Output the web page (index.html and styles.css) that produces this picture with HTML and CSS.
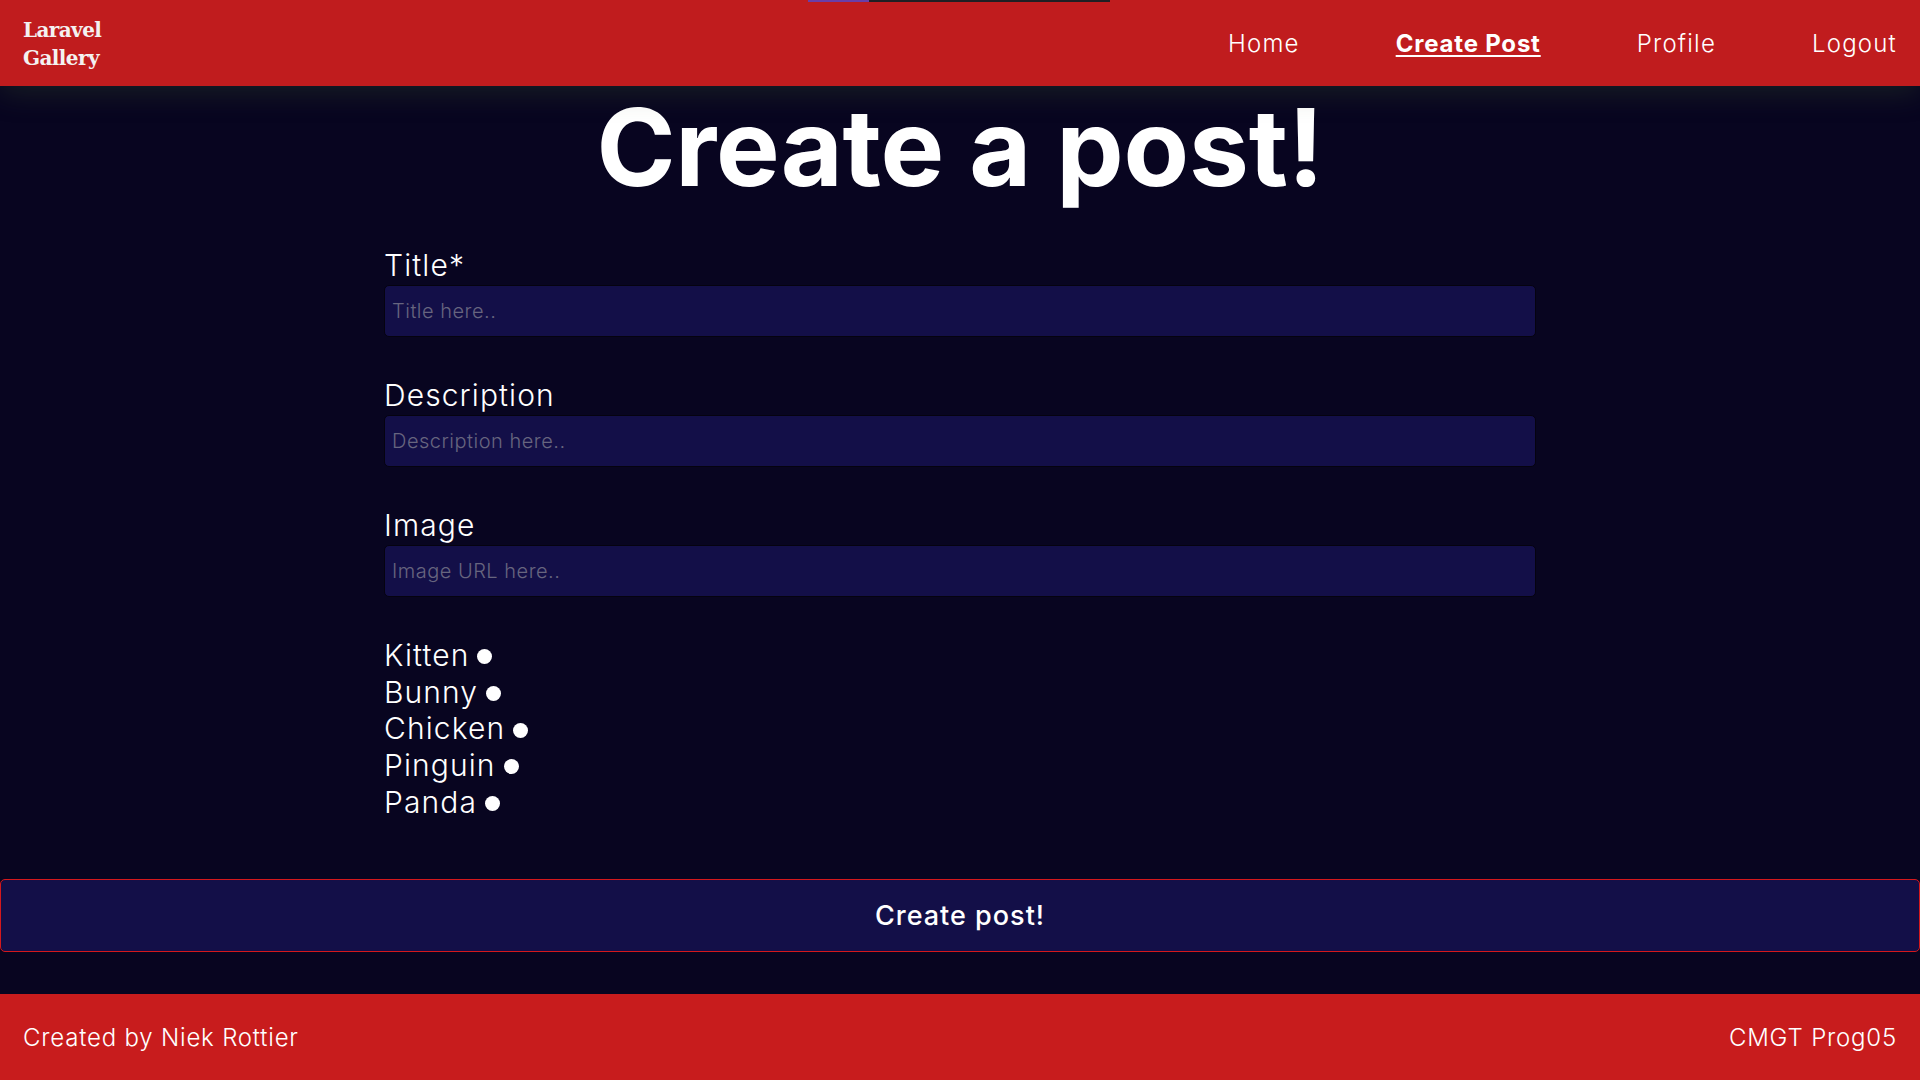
FILE: index.html
```html
<!DOCTYPE html>
<html lang="en">
<head>
<meta charset="utf-8">
<title>Laravel Gallery - Create Post</title>
<link rel="stylesheet" href="styles.css">
</head>
<body>
<div class="topline"><span class="topline-a"></span><span class="topline-b"></span></div>
<header class="nav">
  <a class="logo" href="#">Laravel<br>Gallery</a>
  <nav class="links">
    <a href="#">Home</a>
    <a href="#" class="active">Create Post</a>
    <a href="#">Profile</a>
    <a href="#">Logout</a>
  </nav>
</header>
<main class="main">
  <h1 class="heading">Create a post!</h1>
  <form class="form">
    <div class="fields">
      <div class="group">
        <label class="label" for="title">Title*</label>
        <input class="input" id="title" type="text" placeholder="Title here..">
      </div>
      <div class="group">
        <label class="label" for="desc">Description</label>
        <input class="input" id="desc" type="text" placeholder="Description here..">
      </div>
      <div class="group">
        <label class="label" for="img">Image</label>
        <input class="input" id="img" type="text" placeholder="Image URL here..">
      </div>
      <div class="radios">
        <label class="radio">Kitten<input type="radio" name="animal"></label>
        <label class="radio">Bunny<input type="radio" name="animal"></label>
        <label class="radio">Chicken<input type="radio" name="animal"></label>
        <label class="radio">Pinguin<input type="radio" name="animal"></label>
        <label class="radio">Panda<input type="radio" name="animal"></label>
      </div>
    </div>
    <button class="submit" type="button">Create post!</button>
  </form>
</main>
<footer class="footer">
  <span>Created by Niek Rottier</span>
  <span>CMGT Prog05</span>
</footer>
</body>
</html>
```

FILE: styles.css
```css
* { box-sizing: border-box; }

html, body { margin: 0; padding: 0; }

body {
  background: #080520;
  color: #ffffff;
  font-family: Inter, "Noto Sans", sans-serif;
  min-height: 100vh;
  display: flex;
  flex-direction: column;
}

.topline {
  position: absolute;
  top: 0;
  left: 808px;
  height: 2px;
  display: flex;
  z-index: 5;
}
.topline-a { width: 61px; background: #6a3ea8; }
.topline-b { width: 241px; background: #1f1f24; }

.nav {
  position: relative;
  z-index: 2;
  height: 86px;
  background: #c01c1e;
  display: flex;
  align-items: center;
  justify-content: space-between;
  padding: 0 23px;
  box-shadow: 0 6px 30px rgba(70, 100, 45, 0.28);
}

.logo {
  font-family: "DejaVu Serif", "Liberation Serif", serif;
  font-weight: 700;
  font-size: 20px;
  line-height: 28px;
  color: #f4f1f1;
  text-decoration: none;
  letter-spacing: -0.6px;
  padding-top: 1px;
}

.links {
  display: flex;
  gap: 96px;
}

.links a {
  color: #ffffff;
  font-size: 24px;
  font-weight: 300;
  letter-spacing: 1.2px;
  text-decoration: none;
}

.links a.active {
  font-weight: 700;
  letter-spacing: 0.8px;
  text-decoration: underline;
  text-decoration-thickness: 2px;
  text-underline-offset: 3px;
}

.main {
  display: flex;
  flex-direction: column;
}

.heading {
  margin: 8px 0 0;
  text-align: center;
  font-size: 107px;
  line-height: 107px;
  font-weight: 700;
  letter-spacing: -0.2px;
  color: #ffffff;
}

.form {
  margin-top: 46px;
}

.fields {
  width: 60%;
  margin: 0 auto;
}

.group {
  margin-bottom: 40px;
}

.label {
  display: block;
  font-size: 30px;
  line-height: 36px;
  font-weight: 300;
  letter-spacing: 1.1px;
  margin-bottom: 2px;
}

.input {
  display: block;
  width: 100%;
  height: 52px;
  background: #130f48;
  border: 1px solid #05030f;
  border-radius: 5px;
  color: #ffffff;
  font-family: Inter, "Noto Sans", sans-serif;
  font-size: 20px;
  font-weight: 300;
  letter-spacing: 0.5px;
  padding: 0 7px;
  outline: none;
}

.input::placeholder {
  color: #67657f;
}

.radios {
  display: flex;
  flex-direction: column;
  align-items: flex-start;
}

.radio {
  font-size: 30px;
  line-height: 36.7px;
  font-weight: 300;
  letter-spacing: 1.1px;
}

.radio input {
  appearance: none;
  -webkit-appearance: none;
  width: 15px;
  height: 15px;
  border-radius: 50%;
  background: #ffffff;
  border: none;
  margin: 0 0 0 8px;
  vertical-align: middle;
  position: relative;
  top: -1px;
}

.submit {
  display: block;
  width: 100%;
  height: 73px;
  margin-top: 58px;
  background: #130f48;
  border: 1px solid #d4181c;
  border-radius: 5px;
  color: #ffffff;
  font-family: Inter, "Noto Sans", sans-serif;
  font-size: 27px;
  font-weight: 500;
  letter-spacing: 1px;
  cursor: pointer;
}

.footer {
  margin-top: auto;
  height: 86px;
  background: #c81c1d;
  display: flex;
  align-items: center;
  justify-content: space-between;
  padding: 0 23px;
  font-size: 24px;
  font-weight: 300;
  letter-spacing: 0.8px;
}
```
